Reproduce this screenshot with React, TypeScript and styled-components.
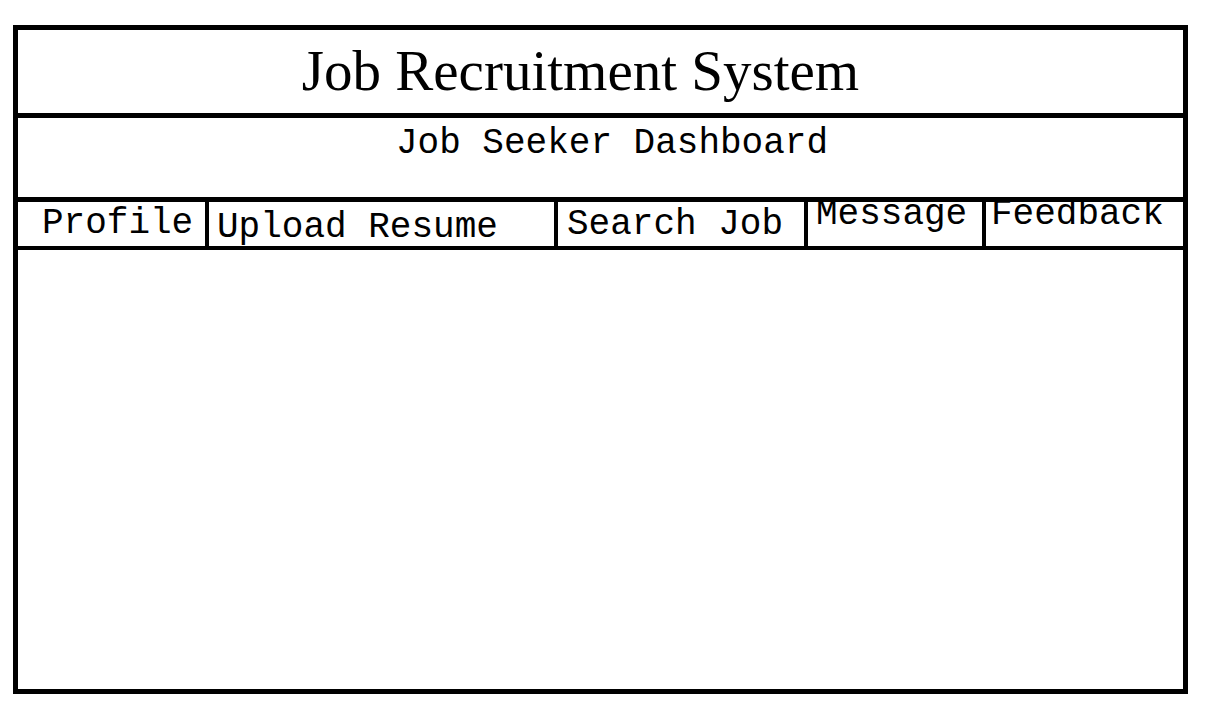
import React from 'react';
import styled, { createGlobalStyle } from 'styled-components';

const GlobalStyle = createGlobalStyle`
    body {
        margin: 0;
        background: #fff;
        color: #000;
    }
`;

const Frame = styled('div')`
    box-sizing: border-box;
    width: 1175px;
    height: 669px;
    margin: 25px 0 0 13px;
    border: 5px solid #000;
    display: flex;
    flex-direction: column;
`;

const Header = styled('header')`
    box-sizing: border-box;
    height: 88px;
    border-bottom: 5px solid #000;
    padding: 12px 40px 0 0;
    text-align: center;
`;

const Title = styled('h1')`
    margin: 0;
    font-family: "Liberation Serif", "Times New Roman", serif;
    font-weight: normal;
    font-size: 57px;
    line-height: 57px;
`;

const SubHeader = styled('div')`
    box-sizing: border-box;
    height: 84px;
    padding: 8px 0 0 23px;
    border-bottom: 5px solid #000;
    text-align: center;
    font-family: "Liberation Mono", "Courier New", monospace;
    font-size: 36px;
    line-height: 36px;
`;

const TabRow = styled('nav')`
    box-sizing: border-box;
    display: flex;
    height: 48px;
    border-bottom: 4px solid #000;
`;

const Tab = styled('div')<{ $width?: number; $left: number; $top: number; $last?: boolean }>`
    box-sizing: border-box;
    ${({ $width }) => ($width ? `width: ${$width}px;` : 'flex: 1;')}
    border-right: ${({ $last }) => ($last ? 'none' : '4px solid #000')};
    padding: ${({ $top, $left }) => `${$top}px 0 0 ${$left}px`};
    font-family: "Liberation Mono", "Courier New", monospace;
    font-size: 36px;
    line-height: 20px;
    white-space: nowrap;
`;

const Content = styled('main')`
    flex: 1;
`;

const tabs = [
    { label: 'Profile', width: 191, left: 24, top: 12 },
    { label: 'Upload Resume', width: 349, left: 8, top: 16 },
    { label: 'Search Job', width: 250, left: 9, top: 13 },
    { label: 'Message', width: 178, left: 8, top: 3 },
    { label: 'Feedback', left: 5, top: 3, last: true },
];

export default () => (
    <>
        <GlobalStyle />
        <Frame>
            <Header>
                <Title>Job Recruitment System</Title>
            </Header>
            <SubHeader>Job Seeker Dashboard</SubHeader>
            <TabRow>
                {tabs.map(({ label, width, left, top, last }) => (
                    <Tab key={label} $width={width} $left={left} $top={top} $last={last}>
                        {label}
                    </Tab>
                ))}
            </TabRow>
            <Content />
        </Frame>
    </>
);
